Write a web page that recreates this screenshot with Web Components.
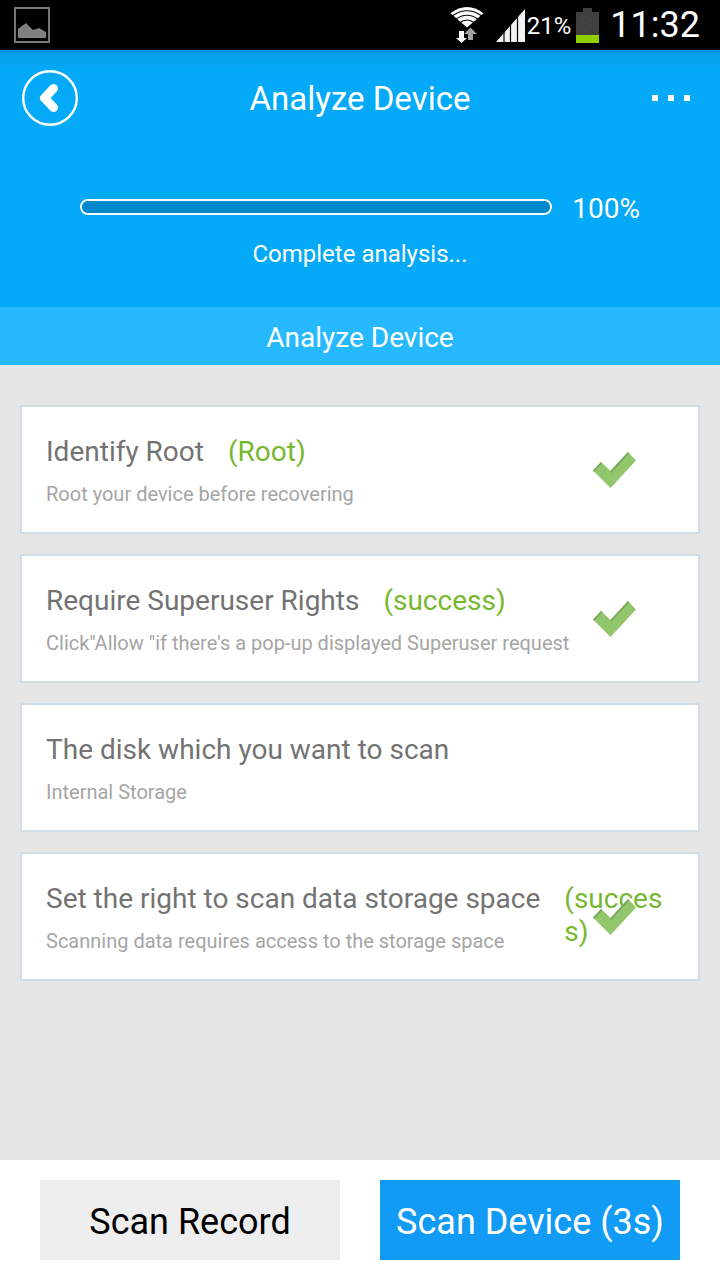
<!DOCTYPE html>
<html lang="en">
<head>
<meta charset="utf-8">
<meta name="viewport" content="width=device-width, initial-scale=1">
<title>Analyze Device</title>
<style>
  html, body { margin: 0; }
  body { font-family: Roboto, "Noto Sans", sans-serif; background: #e6e6e6; color: #000; }
</style>
</head>
<body>
<analyze-app>
  <status-bar slot="status" battery="21%" time="11:32"></status-bar>
  <app-header slot="header" heading="Analyze Device">
    <analysis-progress value="100">Complete analysis...</analysis-progress>
  </app-header>
  <section-band slot="header">Analyze Device</section-band>
  <check-card done>Identify Root<span slot="state">(Root)</span><span slot="detail">Root your device before recovering</span></check-card>
  <check-card done>Require Superuser Rights<span slot="state">(success)</span><span slot="detail">Click"Allow "if there's a pop-up displayed Superuser request</span></check-card>
  <check-card>The disk which you want to scan<span slot="detail">Internal Storage</span></check-card>
  <check-card done>Set the right to scan data storage space<span slot="state">(success)</span><span slot="detail">Scanning data requires access to the storage space</span></check-card>
  <action-bar slot="footer">
    <action-button>Scan Record</action-button>
    <action-button primary>Scan Device (3s)</action-button>
  </action-bar>
</analyze-app>
<script>
const define = (name, render) => customElements.define(name, class extends HTMLElement {
  constructor() {
    super();
    const template = document.createElement('template');
    template.innerHTML = render(this);
    this.attachShadow({ mode: 'open' }).append(template.content.cloneNode(true));
  }
});

define('analyze-app', () => `
<style>
  :host { display: flex; flex-direction: column; min-height: 100vh; }
  main { flex: 1; display: flex; flex-direction: column; gap: 20px; padding: 40px 20px; }
</style>
<slot name="status"></slot>
<slot name="header"></slot>
<main><slot></slot></main>
<slot name="footer"></slot>`);

define('status-bar', el => `
<style>
  :host { display: flex; align-items: center; justify-content: space-between; height: 50px; padding: 0 20px 0 13px; background: #000; color: #fff; }
  svg { display: block; flex: none; }
  .right { display: flex; align-items: center; }
  .signal { margin: 0 2px 0 12px; }
  .level { font-size: 24px; line-height: 28px; padding-top: 2px; }
  .battery { margin: 0 11px 0 5px; }
  .time { font-size: 36px; line-height: 48px; }
</style>
<svg width="38" height="38" viewBox="0 0 38 38" aria-hidden="true">
  <rect x="2" y="2" width="34" height="34" fill="none" stroke="#777" stroke-width="2"/>
  <path d="M5 32V23L13 17L20 24L26 22L33 26V32Z" fill="#808080"/>
</svg>
<div class="right">
  <svg width="34" height="36" viewBox="0 0 34 36" aria-hidden="true">
    <path d="M17 20.500L0.500 6.200Q17 -6 33.500 6.200Z" fill="#fff"/>
    <g fill="none" stroke="#000" stroke-width="1.200">
      <path d="M2 9Q17 -1.500 32 9"/>
      <path d="M5.500 12.500Q17 4 28.500 12.500"/>
      <path d="M9.500 16Q17 10 24.500 16"/>
    </g>
    <path d="M9 24H14V31H17L11.500 36L6 31H9Z" fill="#fff"/>
    <path d="M18 33V27H14L20.500 20.500L27 27H23V33Z" fill="#a0a0a0"/>
  </svg>
  <svg class="signal" width="29" height="33" viewBox="0 0 29 33" aria-hidden="true">
    <path d="M0 33L29 0V33Z" fill="#f2f2f2"/>
    <path d="M8 20V33M14.500 14V33M21.500 6V33" stroke="#000" stroke-width="1.200"/>
  </svg>
  <span class="level">${el.getAttribute('battery')}</span>
  <svg class="battery" width="23" height="35" viewBox="0 0 23 35" aria-hidden="true">
    <path d="M0 4H7V0H16V4H23V27H0Z" fill="#404040"/>
    <path d="M0 27H23V35H0Z" fill="#92cf00"/>
    <path d="M6 10h1m8 2h1m-9 4h1m6 2h1m-5 4h1m6-1h1" stroke="#555"/>
  </svg>
  <span class="time">${el.getAttribute('time')}</span>
</div>`);

define('app-header', el => `
<style>
  :host { display: block; box-sizing: border-box; min-height: 257px; background: linear-gradient(#0693db, #05a0ec 6px, #04a9f7 20px); color: #fff; }
  .bar { display: grid; grid-template-columns: 56px 1fr 56px; align-items: center; padding: 20px 22px 0; }
  h1 { margin: 0; padding-top: 2px; font-size: 33px; line-height: 40px; font-weight: 400; text-align: center; }
  button { display: grid; place-items: center; height: 56px; width: 56px; padding: 0; border: 0; background: none; color: inherit; }
  .more { justify-content: end; padding-right: 8px; }
  svg { display: block; }
</style>
<div class="bar">
  <button aria-label="Back">
    <svg width="56" height="56" viewBox="0 0 56 56" aria-hidden="true" fill="none" stroke="#fff">
      <circle cx="28" cy="28" r="26.800" stroke-width="2.400"/>
      <path d="M31.500 18.500L22.500 28L31.500 37.500" stroke-width="9" stroke-linecap="round" stroke-linejoin="round"/>
    </svg>
  </button>
  <h1>${el.getAttribute('heading')}</h1>
  <button class="more" aria-label="More options">
    <svg width="38" height="6" viewBox="0 0 38 6" aria-hidden="true"><path d="M0 0h6v6H0zM16 0h6v6h-6zM32 0h6v6h-6z" fill="#fff"/></svg>
  </button>
</div>
<slot></slot>`);

define('analysis-progress', el => `
<style>
  :host { display: block; padding: 61px 80px 0; text-align: center; }
  .row { display: flex; align-items: center; gap: 20px; }
  progress { flex: 1; min-width: 0; box-sizing: border-box; height: 16px; appearance: none; -webkit-appearance: none; border: 2px solid #fff; border-radius: 8px; overflow: hidden; background: #0089cb; }
  progress::-webkit-progress-bar { background: #0089cb; }
  progress::-webkit-progress-value { background: #0089cb; }
  output { padding-top: 4px; font-size: 28px; line-height: 36px; }
  p { margin: 11px 0 0; font-size: 24px; line-height: 32px; }
</style>
<div class="row">
  <progress id="bar" max="100" value="${el.getAttribute('value')}" aria-label="Analysis"></progress>
  <output for="bar">${el.getAttribute('value')}%</output>
</div>
<p><slot></slot></p>`);

define('section-band', () => `
<style>
  :host { display: block; padding: 14px 20px 10px; background: #27b9ff; color: #fff; }
  h2 { margin: 0; font-size: 28px; line-height: 34px; font-weight: 400; text-align: center; }
</style>
<h2><slot></slot></h2>`);

define('check-card', el => `
<style>
  :host { display: grid; grid-template-columns: max-content minmax(0, 1fr); grid-template-rows: 33px 38px; column-gap: 24px; align-content: start; position: relative; box-sizing: border-box; min-height: 129px; padding: 28px 30px 20px 24px; background: #fff; border: 2px solid #d2dee7; }
  h3 { margin: 0; font-size: 28px; line-height: 33px; font-weight: 400; color: #737373; }
  .state { grid-area: 1 / 2 / 3 / 3; font-size: 28px; line-height: 33px; color: #76b82f; overflow-wrap: anywhere; }
  p { grid-area: 2 / 1 / 3 / 3; align-self: end; margin: 0; font-size: 20px; line-height: 24px; color: #a5a5a5; }
  svg { position: absolute; right: 62px; top: 0; bottom: 0; margin: auto 0; }
</style>
<h3><slot></slot></h3>
<div class="state"><slot name="state"></slot></div>
<p><slot name="detail"></slot></p>
${el.hasAttribute('done') ? `<svg width="43" height="36" viewBox="0 0 43 36" role="img" aria-label="Done">
  <path d="M0 18.500L8 10L17.500 19L35 0L43 8.500L17.500 36Z" fill="#91c66c"/>
  <path d="M0 18.500L8 10L9.300 11.300L1.300 19.700ZM17.500 19L35 0L36.300 1.500L17.700 21.500Z" fill="#79aa5a"/>
</svg>` : ''}`);

define('action-bar', () => `
<style>
  :host { display: grid; grid-template-columns: 1fr 1fr; gap: 40px; padding: 20px 40px; background: #fff; }
</style>
<slot></slot>`);

define('action-button', el => `
<style>
  :host { display: block; }
  button { display: block; width: 100%; min-height: 80px; padding: 4px 0 0; border: 0; font: 400 36px/44px Roboto, "Noto Sans", sans-serif; color: #000; background: #eee; white-space: nowrap; }
  .primary { color: #fff; background: #129bf4; }
</style>
<button class="${el.hasAttribute('primary') ? 'primary' : ''}"><slot></slot></button>`);
</script>
</body>
</html>
